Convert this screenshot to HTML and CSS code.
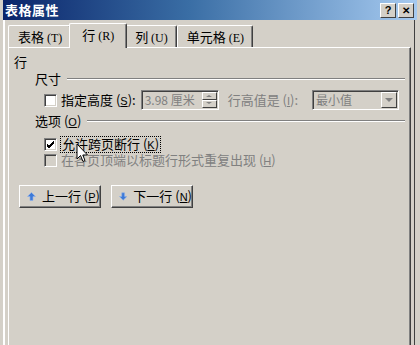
FILE: index.html
```html
<!DOCTYPE html>
<html lang="zh-cn">
<head>
  <meta charset="UTF-8">
  <title>表格属性</title>
  <link rel="stylesheet" href="styles.css">
</head>
<body>

<div class="window">
  <div class="titlebar">
    <span class="title">表格属性</span>
    <div class="caption-btns">
      <span class="cap-btn">?</span>
      <span class="cap-btn close">✕</span>
    </div>
  </div>

  <div class="tabs">
    <div class="tab">表格 <u>(T)</u></div>
    <div class="tab active">行 <u>(R)</u></div>
    <div class="tab">列 <u>(U)</u></div>
    <div class="tab">单元格 <u>(E)</u></div>
  </div>

  <div class="panel">
    <div class="section-title">行</div>

    <div class="group-head"><span>尺寸</span><span class="etch"></span></div>
    <div class="row size-row">
      <span class="check"></span>
      <span class="label">指定高度 (<u>S</u>):</span>
      <span class="field">
        <span class="field-text">3.98 厘米</span>
        <span class="spin"><span class="spin-up"></span><span class="spin-down"></span></span>
      </span>
      <span class="label dim">行高值是 (<u>I</u>):</span>
      <span class="combo">
        <span class="field-text">最小值</span>
        <span class="drop"><span class="drop-arrow"></span></span>
      </span>
    </div>

    <div class="group-head"><span>选项 (<u>O</u>)</span><span class="etch"></span></div>
    <div class="row opt-row first">
      <span class="check checked">
        <svg width="9" height="9" viewBox="0 0 9 9"><path d="M1 4 L3 6 L8 1 M1 5 L3 7 L8 2 M1 6 L3 8 L8 3" stroke="#000" fill="none"/></svg>
      </span>
      <span class="label focus">允许跨页断行 (<u>K</u>)</span>
      <svg class="cursor" width="13" height="20" viewBox="0 0 13 20"><path d="M1 1 L1 16 L4.5 12.5 L7 18.5 L9 17.5 L6.8 12 L11.5 12 Z" fill="#fff" stroke="#000" stroke-width="1"/></svg>
    </div>
    <div class="row opt-row">
      <span class="check disabled"></span>
      <span class="label dim">在各页顶端以标题行形式重复出现 (<u>H</u>)</span>
    </div>

    <div class="btn-row">
      <button class="btn">
        <svg width="9" height="9" viewBox="0 0 9 9"><path d="M4.5 0.5 L8.5 4.5 L6 4.5 L6 8.5 L3 8.5 L3 4.5 L0.5 4.5 Z" fill="#3d7ad8" stroke="#8fb2ea" stroke-width="0.6"/></svg>
        <span>上一行 (<u>P</u>)</span>
      </button>
      <button class="btn">
        <svg width="9" height="9" viewBox="0 0 9 9"><path d="M4.5 8.5 L8.5 4.5 L6 4.5 L6 0.5 L3 0.5 L3 4.5 L0.5 4.5 Z" fill="#3d7ad8" stroke="#8fb2ea" stroke-width="0.6"/></svg>
        <span>下一行 (<u>N</u>)</span>
      </button>
    </div>
  </div>
</div>

</body>
</html>
```

FILE: styles.css
```css
body { margin: 0; background-color: #d4d0c8; font-family: "Noto Sans CJK SC", "Liberation Sans", sans-serif; font-size: 12px; line-height: 16px; color: #000; }
u { text-decoration: underline; }

.window { width: 420px; height: 345px; box-sizing: border-box; border-left: 2px solid #d4d0c8; box-shadow: inset 1px 0 0 #d4d0c8, inset 3px 0 0 #ffffff, inset -5px 0 0 #d4d0c8, inset -6px 0 0 #404040; overflow: hidden; display: flex; flex-direction: column; }

/* barra de título */
.titlebar { height: 20px; margin: 0 3px 0 1px; background: linear-gradient(to right, #0a246a 0%, #3a6ea5 45%, #a6caf0 100%); display: flex; align-items: center; justify-content: space-between; padding: 0 3px 0 2px; }
.title { color: #fff; font-weight: bold; font-size: 13px; letter-spacing: 0.5px; }
.caption-btns { display: flex; gap: 2px; }
.cap-btn { width: 14px; height: 13px; background-color: #d4d0c8; border-top: 1px solid #fff; border-left: 1px solid #fff; border-right: 1px solid #404040; border-bottom: 1px solid #404040; font-family: "Liberation Sans", sans-serif; font-weight: bold; font-size: 11px; line-height: 13px; text-align: center; }
.cap-btn.close { font-size: 10px; }

/* abas */
.tabs { display: flex; align-items: flex-end; height: 27px; padding-left: 6px; position: relative; z-index: 1; }
.tab { height: 21px; line-height: 21px; padding: 0 8px 0 9px; white-space: nowrap; border-top: 1px solid #fff; border-left: 1px solid #fff; border-right: 1px solid #404040; box-shadow: inset -1px 0 0 #808080; font-size: 13px; border-radius: 2px 2px 0 0; }
.tab u { font-size: 12px; font-family: "Liberation Serif", serif; text-decoration: none; }
.tab.active { height: 24px; line-height: 22px; margin: 0 -2px; padding: 0 12px; background-color: #d4d0c8; margin-bottom: -1px; position: relative; z-index: 2; }

.panel { flex: 1; margin-left: 6px; margin-right: 9px; border-top: 1px solid #fff; border-left: 1px solid #fff; border-right: 1px solid #404040; box-shadow: inset -1px 0 0 #808080; padding: 5px 0 0 5px; display: flex; flex-direction: column; }

.section-title { height: 17px; line-height: 17px; font-size: 13px; }
.group-head { display: flex; align-items: center; gap: 6px; height: 18px; margin-left: 21px; margin-right: 5px; font-size: 13px; white-space: nowrap; }
.group-head u, .label u { font-family: "Liberation Sans", sans-serif; font-size: 11px; }
.etch { flex: 1; height: 0; border-top: 1px solid #808080; border-bottom: 1px solid #fff; }

.row { display: flex; align-items: center; margin-left: 30px; }
.size-row { height: 24px; }
.opt-row { height: 16px; }
.opt-row .label { line-height: 14px; }
.opt-row.first { margin-top: 6px; }

.check { width: 9px; height: 9px; box-sizing: content-box; background-color: #fff; border-top: 1px solid #808080; border-left: 1px solid #808080; border-right: 1px solid #fff; border-bottom: 1px solid #fff; box-shadow: inset 1px 1px 0 #404040, inset -1px -1px 0 #d4d0c8; padding: 1px; margin-right: 4px; flex-shrink: 0; display: flex; }
.check.disabled { background-color: #d4d0c8; }
.label { font-size: 13px; white-space: nowrap; }
.label.dim { color: #808080; }
.size-row .label.dim { margin-left: 9px; margin-right: 9px; }
.label.focus { outline: 1px dotted #000; outline-offset: 0; padding: 0 1px; }
.cursor { margin-left: -84px; margin-top: 18px; position: relative; }

.field, .combo { height: 20px; box-sizing: border-box; border-top: 1px solid #808080; border-left: 1px solid #808080; border-right: 1px solid #fff; border-bottom: 1px solid #fff; box-shadow: inset 1px 1px 0 #404040; display: flex; align-items: center; margin-left: 5px; }
.field { width: 78px; }
.combo { width: 87px; }
.field-text { flex: 1; color: #808080; padding-left: 3px; font-size: 12px; white-space: nowrap; }
.spin { width: 15px; height: 16px; display: flex; flex-direction: column; margin-right: 1px; }
.spin-up, .spin-down { flex: 1; border-top: 1px solid #fff; border-left: 1px solid #fff; border-right: 1px solid #404040; border-bottom: 1px solid #404040; position: relative; }
.spin-up::after, .spin-down::after { content: ""; position: absolute; left: 3px; top: 2px; border-left: 3px solid transparent; border-right: 3px solid transparent; }
.spin-up::after { border-bottom: 2px solid #808080; }
.spin-down::after { border-top: 2px solid #808080; top: 1px; }
.drop { width: 14px; height: 14px; border-top: 1px solid #fff; border-left: 1px solid #fff; border-right: 1px solid #404040; border-bottom: 1px solid #404040; margin-right: 1px; display: flex; align-items: center; justify-content: center; }
.drop-arrow { width: 0; height: 0; border-left: 4px solid transparent; border-right: 4px solid transparent; border-top: 4px solid #808080; }

.btn-row { display: flex; gap: 10px; margin-top: 17px; margin-left: 5px; }
.btn { width: 82px; height: 23px; background-color: #d4d0c8; border-top: 1px solid #fff; border-left: 1px solid #fff; border-right: 1px solid #404040; border-bottom: 1px solid #404040; box-shadow: inset -1px -1px 0 #808080; font-family: "Noto Sans CJK SC", sans-serif; font-size: 13px; line-height: 16px; white-space: nowrap; display: flex; align-items: center; gap: 6px; padding: 0 0 0 7px; color: #000; }
.btn u { font-family: "Liberation Sans", sans-serif; font-size: 11px; }
```
